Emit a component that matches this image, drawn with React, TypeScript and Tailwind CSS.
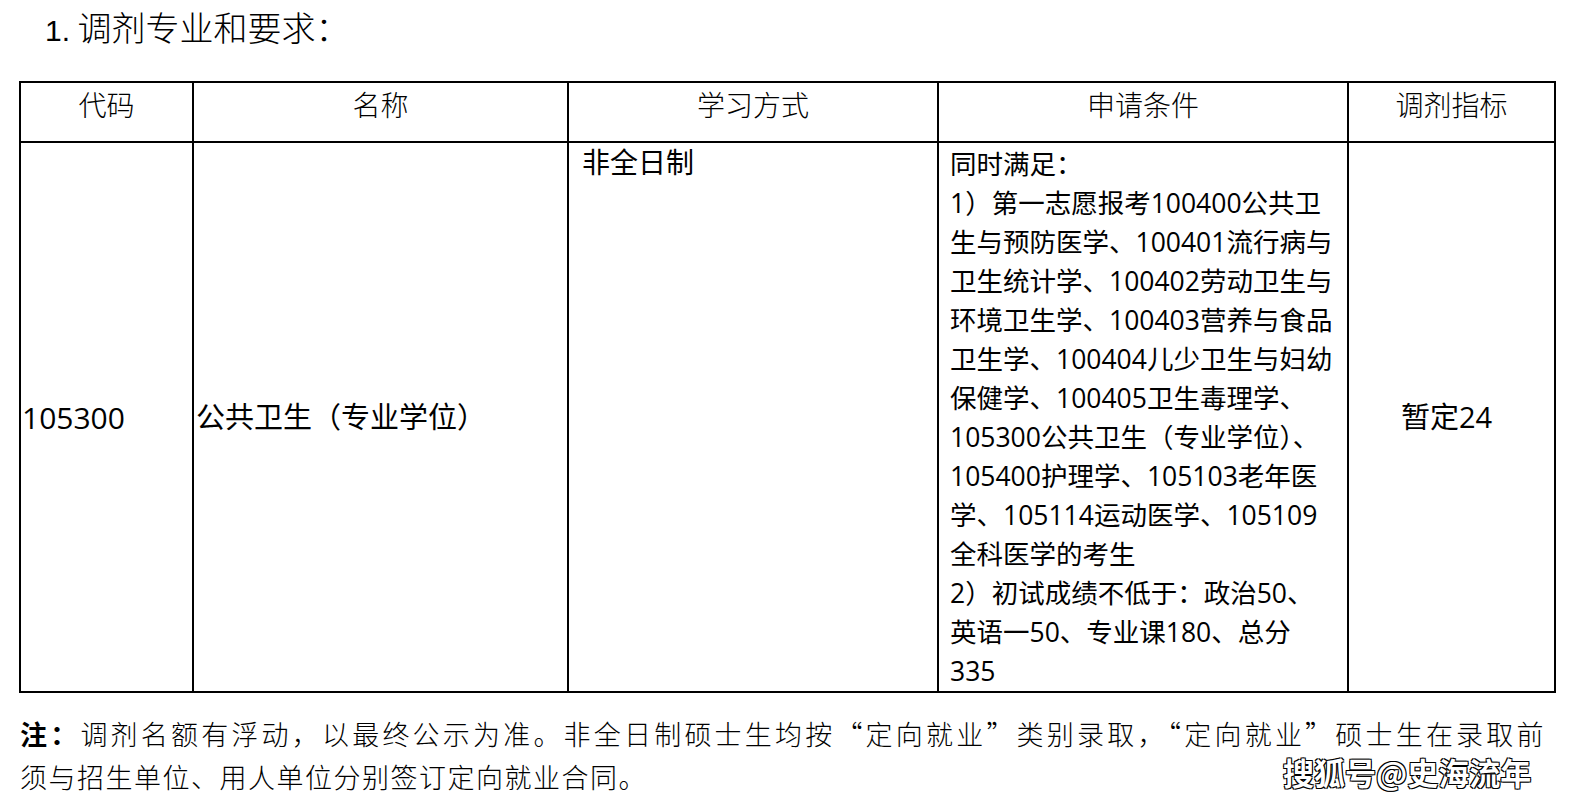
import React from "react";

const sans = "font-['Open_Sans','Noto_Sans_CJK_SC',sans-serif]";

const reqLines = [
  "同时满足：",
  "1）第一志愿报考100400公共卫",
  "生与预防医学、100401流行病与",
  "卫生统计学、100402劳动卫生与",
  "环境卫生学、100403营养与食品",
  "卫生学、100404儿少卫生与妇幼",
  "保健学、100405卫生毒理学、",
  "105300公共卫生（专业学位）、",
  "105400护理学、105103老年医",
  "学、105114运动医学、105109",
  "全科医学的考生",
  "2）初试成绩不低于：政治50、",
  "英语一50、专业课180、总分",
  "335",
];

const headers = ["代码", "名称", "学习方式", "申请条件", "调剂指标"];

export default function App() {
  return (
    <div className={`relative w-[1573px] h-[806px] bg-white text-black overflow-hidden ${sans}`}>
      <div className="h-[81px] pl-[45px] pt-[5px] text-[34px] leading-[44px] font-light font-['Noto_Sans_CJK_SC',sans-serif]">
        <span className="font-['Liberation_Sans',sans-serif] text-[30px]">1.</span> 调剂专业和要求：
      </div>

      <div className="ml-[19px] w-[1537px] grid grid-cols-[173px_375px_370px_410px_207px] border-l-2 border-t-2 border-black">
        {headers.map((h) => (
          <div
            key={h}
            className="h-[60px] border-r-2 border-b-2 border-black flex justify-center pt-[3px] text-[28px] leading-[36px] font-light font-['Noto_Sans_CJK_SC',sans-serif]"
          >
            {h}
          </div>
        ))}

        <div className="border-r-2 border-b-2 border-black flex items-center pl-[1px] text-[30px]">
          105300
        </div>
        <div className="border-r-2 border-b-2 border-black flex items-center pl-[2px] text-[29px]">
          公共卫生（专业学位）
        </div>
        <div className="border-r-2 border-b-2 border-black pl-[13px] pt-[1px] text-[28px] leading-[36px]">
          非全日制
        </div>
        <div className="border-r-2 border-b-2 border-black pl-[11px] pt-[2px] text-[26.5px] leading-[39px] whitespace-nowrap">
          {reqLines.map((l, i) => (
            <div key={i}>{l}</div>
          ))}
        </div>
        <div className="border-r-2 border-b-2 border-black flex items-center justify-center pr-[10px] text-[29px]">
          暂定24
        </div>
      </div>

      <div className="ml-[20px] mt-[19px] text-[27px] leading-[43px] font-light tracking-[1.5px] font-['Noto_Sans_CJK_SC',sans-serif]">
        <div className="w-[1525px] [text-align-last:justify]">
          <span className="font-bold">注：</span>调剂名额有浮动，以最终公示为准。非全日制硕士生均按“定向就业”类别录取，“定向就业”硕士生在录取前
        </div>
        <div>须与招生单位、用人单位分别签订定向就业合同。</div>
      </div>

      <div className="absolute left-[1283px] top-[756px] text-[31px] leading-[32px] text-white font-bold font-['Noto_Sans_CJK_SC',sans-serif] [text-shadow:1px_1px_0_#000,-1px_1px_0_#000,1px_-1px_0_#000,-1px_-1px_0_#000]">
        搜狐号@史海流年
      </div>
    </div>
  );
}
